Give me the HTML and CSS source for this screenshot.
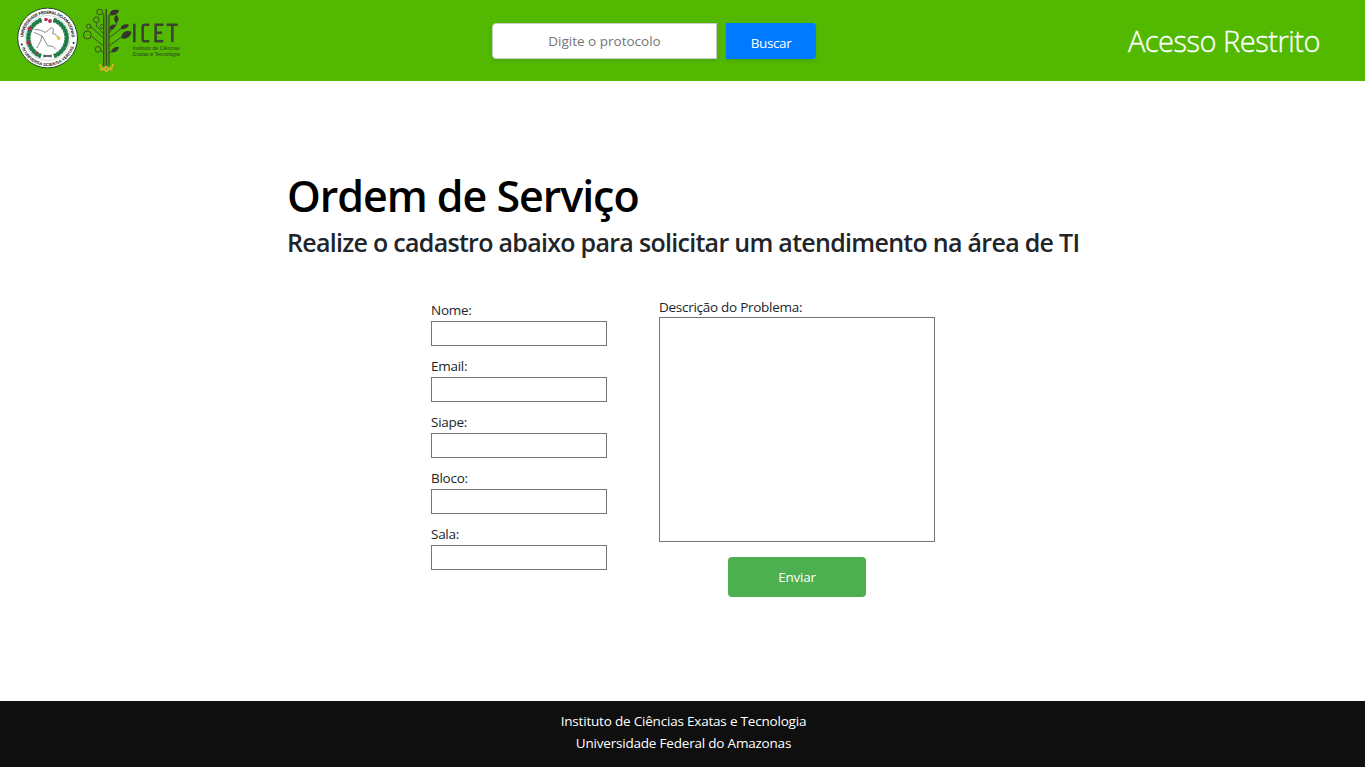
FILE: index.html
```html
<!DOCTYPE html>
<html lang="pt-br">
<head>
<meta charset="utf-8">
<title>Ordem de Serviço</title>
<link rel="stylesheet" href="styles.css">
</head>
<body>
<header class="topbar">
  <svg class="logos" width="180" height="74" viewBox="10 0 180 74" role="img" aria-label="UFAM e ICET">
    <defs>
      <path id="arc-top" d="M23.4 38 A24.2 24.2 0 0 1 71.8 38"/>
      <path id="arc-bottom" d="M20.4 41 A27.4 27.4 0 0 0 75 41"/>
    </defs>
    <circle cx="47.6" cy="38" r="29.9" fill="#fff" stroke="#24402c" stroke-width="1"/>
    <circle cx="47.6" cy="38" r="22.6" fill="none" stroke="#b6c3b8" stroke-width=".6"/>
    <text class="seal-text"><textPath href="#arc-top" textLength="74" startOffset="1">UNIVERSIDADE FEDERAL DO AMAZONAS</textPath></text>
    <text class="seal-text"><textPath href="#arc-bottom" textLength="68" startOffset="7">IN UNIVERSA SCIENTIA VERITAS</textPath></text>
    <circle cx="21.8" cy="44.400" r="1" fill="#222"/>
    <circle cx="73.6" cy="43" r="1" fill="#222"/>
    <path d="M41.500 20A19 19 0 0 0 41 56M53.500 20A19 19 0 0 1 54 56" fill="none" stroke="#2c8a55" stroke-width="4.600" stroke-dasharray="3.2 .5"/>
    <path d="M41.500 20A19 19 0 0 0 41 56M53.500 20A19 19 0 0 1 54 56" fill="none" stroke="#237848" stroke-width="2.6"/>
    <g fill="#b7284f"><circle cx="46" cy="19.500" r="1.800"/><circle cx="50" cy="21" r="1.900"/><circle cx="29.500" cy="28.500" r="2"/><circle cx="28.500" cy="42.800" r="2.100"/><circle cx="37" cy="53" r="1.200"/></g>
    <path d="M35 29.500C39 29.500 42 30.500 45 32.500C48 31 49 29 52 27.500C54 29 53.500 31 52.500 33.500C55 34 58 36 59.500 39M34 32C36 34 39 34 42 36C41 42 38 45 37 48M48 46C51 45.500 53 46 56 49.500M42 36C44 38 45 42 48 46" fill="none" stroke="#555" stroke-width=".7"/>
    <path d="M43 57l9-2M43 55l9 2" fill="none" stroke="#333" stroke-width=".9"/>
    <path d="M58.700 35.500l.7 1.800 1.900.1-1.500 1.200.5 1.900-1.600-1.100-1.600 1.100.5-1.900-1.500-1.200 1.900-.1z" fill="#e5bd38"/>
    <g transform="translate(75 0) scale(.33333)">
      <g fill="none" stroke="#3c4a2c" stroke-width="3">
        <circle cx="74" cy="36" r="8.500"/><circle cx="64" cy="59" r="8.500"/><circle cx="41" cy="79" r="6.500"/><circle cx="81" cy="80" r="6"/><circle cx="37" cy="105" r="12"/><circle cx="69" cy="148" r="8.500"/>
        <path d="M82 38L88 46V195M64 68V78L88 104M47 80L88 116M49 108L88 140M77 151L88 160M93 27V190M104 46L98 54V195M124 65V75L98 102M112 84L98 94M140 84L98 117M141 110L98 141M113 152L98 162"/>
      </g>
      <path d="M86 45H101V197L93 205L85 197z" fill="#4a9a14"/>
      <path d="M86 45V198M94 27V204M102 45V198" stroke="#39451f" stroke-width="3"/>
      <g fill="#34372f">
        <path d="M104 46C104 31 115 27 132 31C129 44 117 48 104 46z"/>
        <path d="M124 69C114 61 116 51 124 45C133 52 133 62 124 69z"/>
        <path d="M103 88C103 77 111 72 122 74C121 84 113 90 103 88z"/>
        <path d="M137 86C138 75 149 71 162 74C158 85 148 89 137 86z"/>
        <path d="M139 115C140 96 153 90 170 95C166 111 153 119 139 115z"/>
        <path d="M109 157C110 145 119 139 132 142C129 154 120 159 109 157z"/>
      </g>
      <path d="M74 192C76 208 86 210 93 200C101 210 112 208 114 192M74 210L86 207L94 214L102 207L113 210" fill="none" stroke="#e3ad31" stroke-width="5"/>
      <path d="M178 71V127M223 74H209Q203 74 203 80V118Q203 124 209 124H223M265 74H242V124H265M242 98H261M275 74H308M292 74V127" fill="none" stroke="#3b4030" stroke-width="7.500"/>
      <text class="icet-text" x="173" y="151" textLength="141" lengthAdjust="spacingAndGlyphs">Instituto de Ciências</text>
      <text class="icet-text" x="173" y="167" textLength="141" lengthAdjust="spacingAndGlyphs">Exatas e Tecnologia</text>
    </g>
  </svg>
  <form class="search">
    <input class="search-input" type="text" placeholder="Digite o protocolo">
    <button class="search-btn" type="button">Buscar</button>
  </form>
  <a class="restricted">Acesso Restrito</a>
</header>
<main class="content">
  <div class="headings">
    <h1 class="title">Ordem de Serviço</h1>
    <h2 class="subtitle">Realize o cadastro abaixo para solicitar um atendimento na área de TI</h2>
  </div>
  <form class="order">
    <div class="fields">
      <label class="field"><span>Nome:</span><input class="box" type="text"></label>
      <label class="field"><span>Email:</span><input class="box" type="text"></label>
      <label class="field"><span>Siape:</span><input class="box" type="text"></label>
      <label class="field"><span>Bloco:</span><input class="box" type="text"></label>
      <label class="field"><span>Sala:</span><input class="box" type="text"></label>
    </div>
    <div class="problem">
      <label class="desc"><span>Descrição do Problema:</span><textarea class="area"></textarea></label>
      <button class="send" type="button">Enviar</button>
    </div>
  </form>
</main>
<footer class="footer">
  <p>Instituto de Ciências Exatas e Tecnologia</p>
  <p>Universidade Federal do Amazonas</p>
</footer>
</body>
</html>
```
FILE: styles.css
```css
* { box-sizing: border-box; }
body {
  margin: 0;
  height: 767px;
  display: flex;
  flex-direction: column;
  overflow: hidden;
  background: #fff;
  color: #212529;
  font-family: "Segoe UI", "Open Sans", "Noto Sans", sans-serif;
  font-size: 13.5px;
  line-height: 20px;
}
input, button, textarea { font: inherit; margin: 0; }
h1, h2, p { margin: 0; white-space: nowrap; }
.topbar {
  height: 81px;
  flex: none;
  display: flex;
  align-items: flex-start;
  background: #52b900;
}
.logos { margin-left: 10px; flex: none; }
.seal-text { font: 700 4.3px "Liberation Sans", sans-serif; fill: #222; }
.icet-text { font: 15px "Liberation Sans", sans-serif; fill: #35601d; stroke: #35601d; stroke-width: .4px; }
.search { display: flex; gap: 9px; margin: 23px 0 0 302px; }
.search-input {
  width: 225px;
  height: 36px;
  padding: 0;
  border: 1px solid #ccc;
  border-radius: 4px 0 0 4px;
  text-align: center;
  box-shadow: 0 2px 4px rgba(0, 0, 0, .1);
}
.search-input::placeholder { color: #757575; }
.search-btn {
  width: 90px;
  height: 36px;
  padding: 4px 0 0;
  border: 0;
  border-radius: 0 4px 4px 0;
  background: #007bff;
  color: #fff;
  letter-spacing: -.4px;
  box-shadow: 0 2px 4px rgba(0, 0, 0, .1);
}
.restricted {
  margin: 21px 45px 0 auto;
  color: #fff;
  font-size: 29px;
  font-weight: 300;
  letter-spacing: -.5px;
  line-height: 40px;
  white-space: nowrap;
  -webkit-text-stroke: .35px #fff;
}
.content { flex: 1; }
.headings { padding: 85px 0 0 287px; }
.title { color: #000; font-size: 43px; font-weight: 600; letter-spacing: -1.05px; line-height: 60px; }
.subtitle { font-size: 25px; font-weight: 600; letter-spacing: -.71px; line-height: 32px; }
.order { display: flex; gap: 52px; padding: 39px 0 0 431px; }
.fields { display: flex; flex-direction: column; gap: 10px; padding-top: 3px; }
.field, .desc { display: flex; flex-direction: column; letter-spacing: -.27px; }
.field { gap: 1px; }
.field span, .desc span { align-self: flex-start; }
.box {
  width: 176px;
  height: 25px;
  border: 1px solid #767676;
  border-radius: 0;
}
.problem { display: flex; flex-direction: column; align-items: center; gap: 15px; }
.area {
  width: 276px;
  height: 225px;
  border: 1px solid #767676;
  resize: none;
}
.send {
  width: 138px;
  height: 40px;
  border: 0;
  border-radius: 4px;
  background: #4caf50;
  color: #fff;
  letter-spacing: -.25px;
}
.footer {
  height: 66px;
  flex: none;
  padding: 9px 0 0 2px;
  background: #0f0f0f;
  color: #fff;
  text-align: center;
  letter-spacing: -.2px;
  line-height: 22px;
}
```
